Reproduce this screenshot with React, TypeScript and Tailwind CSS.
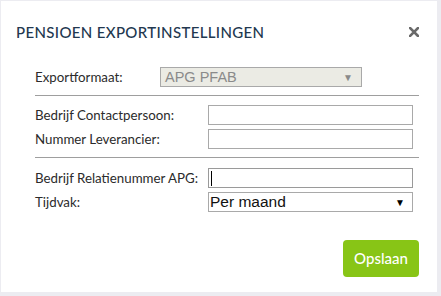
import React from 'react';

const labelCls = "text-[13.3px] leading-[20px] text-[#2b2b2b]";

const ExportSettingsDialog: React.FC = () => {
  return (
    <div className="w-[441px] h-[296px] bg-[#ececf1] pt-px pl-px overflow-hidden" style={{ fontFamily: 'Lato, "Open Sans", sans-serif' }}>
      <div className="w-[436px] h-[291px] bg-white flex flex-col">
        {/* header */}
        <div className="flex items-center justify-between pl-[15px] pr-[18px] pt-[21px]">
          <h1 className="text-[15px] leading-[20px] font-medium text-[#22384f] tracking-[0.35px]">PENSIOEN EXPORTINSTELLINGEN</h1>
          <button aria-label="Sluiten" className="w-[10px] h-[10px] mb-px">
            <svg width="10" height="10" viewBox="0 0 10 10">
              <path d="M1 1 L9 9 M9 1 L1 9" stroke="#6a6a6a" strokeWidth="2.6" strokeLinecap="square" />
            </svg>
          </button>
        </div>

        {/* body */}
        <div className="pl-[34px] pr-[18px] mt-[25px] flex flex-col">
          <div className="flex items-center h-[20px]">
            <label className={`${labelCls} w-[125px]`}>Exportformaat:</label>
            <div className="w-[202px] h-[20px] border border-[#a9a9a9] bg-[#ebebe4] flex items-center justify-between pl-[4px] pr-[8px]" style={{ fontFamily: '"Liberation Sans", Arial, sans-serif' }}>
              <span className="text-[14.5px] leading-[18px] text-[#8a8a8a]">APG PFAB</span>
              <span className="text-[10px] text-[#8a8a8a]">▼</span>
            </div>
          </div>

          <hr className="mt-[8px] border-0 h-px bg-[#9e9e9e]" />

          <div className="mt-[9px] flex items-center h-[20px]">
            <label className={`${labelCls} w-[173px]`}>Bedrijf Contactpersoon:</label>
            <input className="w-[205px] h-[20px] border border-[#a9a9a9] bg-white outline-none" />
          </div>
          <div className="mt-[4px] flex items-center h-[20px]">
            <label className={`${labelCls} w-[173px]`}>Nummer Leverancier:</label>
            <input className="w-[205px] h-[20px] border border-[#a9a9a9] bg-white outline-none" />
          </div>

          <hr className="mt-[8px] border-0 h-px bg-[#9e9e9e]" />

          <div className="mt-[10px] flex items-center h-[20px]">
            <label className={`${labelCls} w-[173px]`}>Bedrijf Relatienummer APG:</label>
            <div className="w-[205px] h-[20px] border border-[#9a9a9a] bg-white flex items-center pl-[2px]">
              <span className="w-px h-[15px] bg-black" />
            </div>
          </div>
          <div className="mt-[4px] flex items-center h-[20px]">
            <label className={`${labelCls} w-[173px]`}>Tijdvak:</label>
            <div className="w-[205px] h-[20px] border border-[#a9a9a9] bg-white flex items-center justify-between pl-[1px] pr-[7px]" style={{ fontFamily: '"Liberation Sans", Arial, sans-serif' }}>
              <span className="text-[15.5px] leading-[18px] text-[#111]">Per maand</span>
              <span className="text-[10px] text-black">▼</span>
            </div>
          </div>

          <div className="mt-[28px] flex justify-end">
            <button className="w-[76px] h-[37px] rounded-[4px] bg-[#88c516] text-white text-[15px] font-medium">
              Opslaan
            </button>
          </div>
        </div>
      </div>
    </div>
  );
};

export default function App() {
  return <ExportSettingsDialog />;
}
